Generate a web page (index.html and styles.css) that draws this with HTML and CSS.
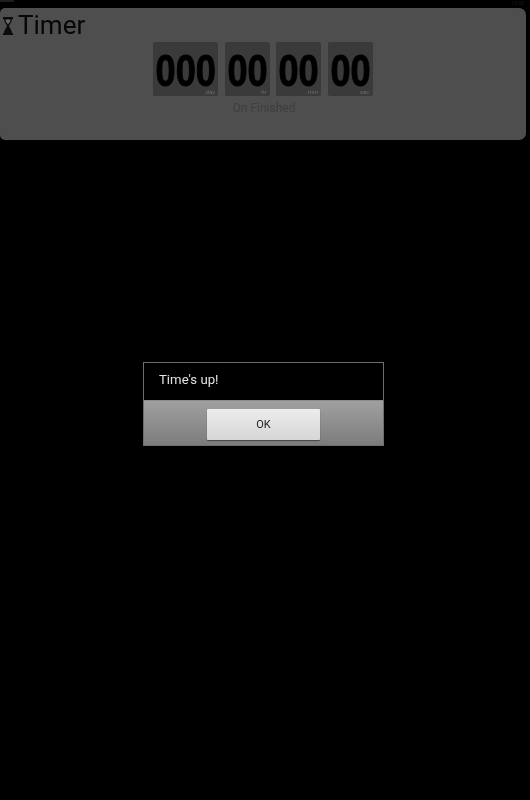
FILE: index.html
```html
<!DOCTYPE html>
<html lang="en">
<head>
<meta charset="utf-8">
<title>Timer</title>
<link rel="stylesheet" href="styles.css">
</head>
<body>
<div class="status"><span class="dots"></span><span class="clock">12:00</span></div>
<section class="panel">
  <header class="title">
    <svg class="glass" viewBox="0 0 10 18" width="10" height="18" aria-hidden="true">
      <path d="M0 0h10v2H9c0 3-2.500 5-3 7 .5 2 3 4 3 7h1v2H0v-2h1c0-3 2.500-5 3-7-.5-2-3-4-3-7H0z" fill="#0b0b0b"/>
      <path d="M2.500 2.500h5c0 2-1.500 3.500-2.500 5-1-1.500-2.500-3-2.500-5z" fill="#6a6a6a"/>
    </svg>
    <h1>Timer</h1>
  </header>
  <div class="counters">
    <div class="box wide"><span class="num">000</span><span class="unit">day</span></div>
    <div class="box"><span class="num">00</span><span class="unit">hr</span></div>
    <div class="box"><span class="num">00</span><span class="unit">min</span></div>
    <div class="box"><span class="num">00</span><span class="unit">sec</span></div>
  </div>
  <p class="finish">On Finished</p>
</section>
<div class="dialog">
  <p class="message">Time's up!</p>
  <div class="actions"><button class="ok" type="button">OK</button></div>
</div>
</body>
</html>
```
FILE: styles.css
```css
html, body {
  margin: 0;
  padding: 0;
  height: 100%;
  background: #000;
}
body {
  position: relative;
  width: 530px;
  height: 800px;
  overflow: hidden;
  font-family: "Roboto", "Liberation Sans", sans-serif;
}
.status {
  height: 8px;
  display: flex;
  justify-content: space-between;
}
.clock {
  font-size: 5px;
  line-height: 6px;
  color: #1c1c1c;
  margin-right: 6px;
}
.dots {
  width: 14px;
  height: 2px;
  background: #1e1e1e;
}
.panel {
  width: 526px;
  height: 132px;
  box-sizing: border-box;
  background: #4e4e4e;
  border-radius: 5px 7px 7px 5px;
  filter: blur(.4px);
}
.title {
  height: 34px;
  display: flex;
  align-items: center;
  padding-left: 3px;
}
.glass {
  flex: none;
  margin-top: 1px;
}
.title h1 {
  margin: 1px 0 0 5px;
  font-size: 26px;
  font-weight: 400;
  color: #060606;
  line-height: 33px;
}
.counters {
  display: flex;
  margin-left: 153px;
  gap: 6.500px;
}
.box {
  width: 45px;
  height: 54px;
  box-sizing: border-box;
  padding: 8px 3px 0;
  background: #3a3a3a;
  border-radius: 2px;
  display: flex;
  flex-direction: column;
  align-items: center;
}
.box.wide {
  width: 65px;
}
.num {
  display: block;
  height: 38px;
  font-family: "Liberation Sans", sans-serif;
  font-size: 44px;
  font-weight: 700;
  line-height: 42px;
  color: #000;
  -webkit-text-stroke: 1px #000;
  transform: scaleX(.82);
}
.unit {
  align-self: flex-end;
  font-size: 6px;
  line-height: 8px;
  color: #6c6c6c;
}
.finish {
  margin: 5px 0 0;
  text-align: center;
  font-size: 12px;
  line-height: 14px;
  color: #3e3e3e;
  padding-left: 2px;
}
.dialog {
  position: absolute;
  left: 143px;
  top: 362px;
  width: 241px;
  height: 84px;
  box-sizing: border-box;
  border: 1px solid #6e6e6e;
  background: #000;
  filter: blur(.3px);
}
.message {
  margin: 0;
  height: 37px;
  padding-left: 15px;
  font-size: 13.200px;
  line-height: 33px;
  color: #e2e2e2;
  box-sizing: border-box;
}
.actions {
  height: 45px;
  border-top: 1px solid #8c8c8c;
  box-sizing: border-box;
  background: linear-gradient(#a0a0a0, #7c7c7c);
  display: flex;
  justify-content: center;
  align-items: flex-start;
  padding-top: 8px;
}
.ok {
  width: 113px;
  height: 31px;
  margin: 0;
  padding: 0;
  border: 0;
  border-radius: 1px;
  background: linear-gradient(#ececec, #d6d6d6);
  box-shadow: 0 1px 1px #444;
  font-family: "Roboto", "Liberation Sans", sans-serif;
  font-size: 11px;
  color: #222;
}
```
